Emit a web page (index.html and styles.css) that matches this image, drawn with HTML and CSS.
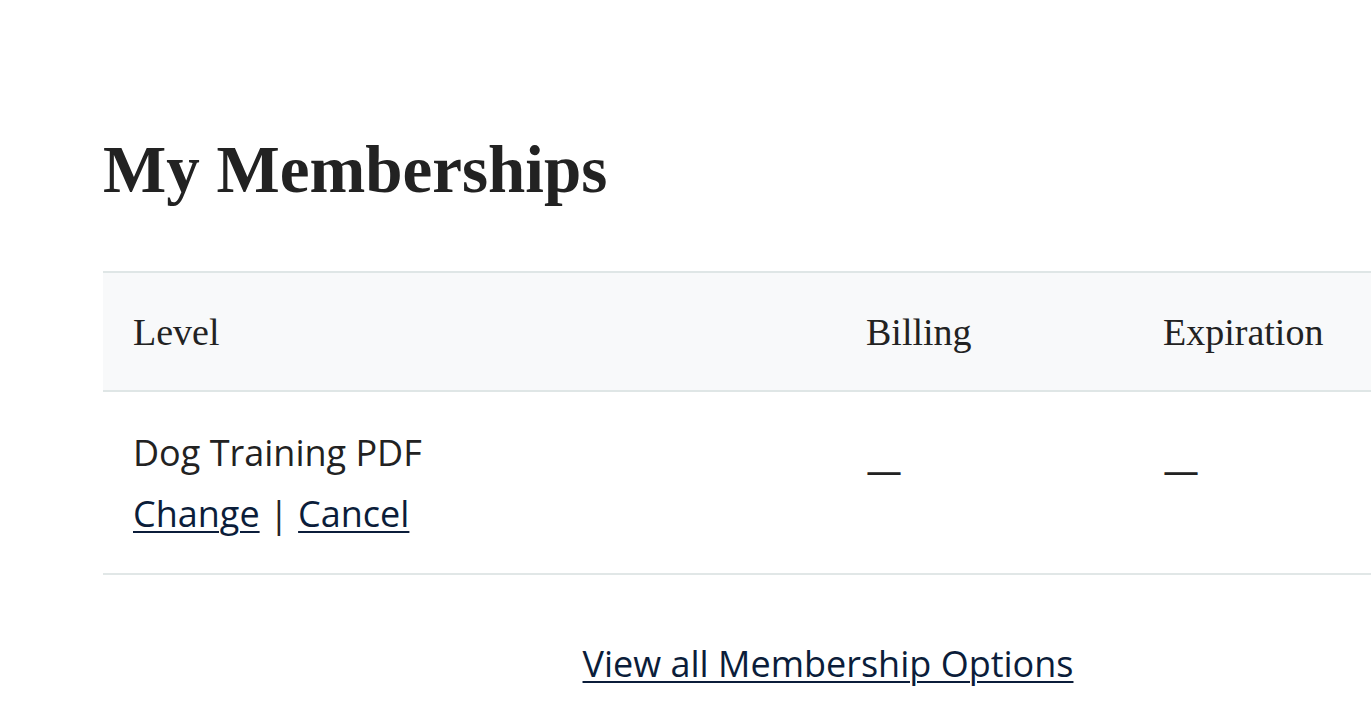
FILE: index.html
```html
<!DOCTYPE html>
<html lang="en">
<head>
<meta charset="utf-8">
<title>My Memberships</title>
<link rel="stylesheet" href="styles.css">
</head>
<body>
<main class="wrap">
  <h1 class="title">My Memberships</h1>
  <table class="members">
    <colgroup>
      <col class="c-level">
      <col class="c-billing">
      <col class="c-exp">
    </colgroup>
    <thead>
      <tr>
        <th>Level</th>
        <th>Billing</th>
        <th>Expiration</th>
      </tr>
    </thead>
    <tbody>
      <tr>
        <td>
          <div class="level-name">Dog Training PDF</div>
          <div class="actions"><a href="#">Change</a> | <a href="#">Cancel</a></div>
        </td>
        <td class="dash">—</td>
        <td class="dash">—</td>
      </tr>
    </tbody>
  </table>
  <p class="all"><a href="#">View all Membership Options</a></p>
</main>
</body>
</html>
```
FILE: styles.css
```css
html, body {
  margin: 0;
  padding: 0;
  background: #ffffff;
  overflow: hidden;
}
body {
  font-family: "Open Sans", "Liberation Sans", sans-serif;
  color: #222222;
}
.wrap {
  padding: 0 0 0 103px;
}
.title {
  font-family: "Liberation Serif", "Times New Roman", serif;
  font-weight: 700;
  font-size: 67px;
  line-height: 1;
  margin: 0;
  padding: 136px 0 0 0;
  height: 135px;
  color: #222222;
}
.members {
  width: 100%;
  border-collapse: collapse;
  table-layout: fixed;
}
.c-level { width: 733px; }
.c-billing { width: 297px; }
.members th {
  font-family: "Liberation Serif", "Times New Roman", serif;
  font-weight: 400;
  font-size: 38px;
  text-align: left;
  background: #f8f9fa;
  height: 117px;
  padding: 0 0 0 30px;
  border-top: 2px solid #dfe6e6;
  border-bottom: 2px solid #dfe6e6;
  vertical-align: middle;
  white-space: nowrap;
}
.members td {
  font-size: 36px;
  line-height: 61px;
  padding: 30px 0 29px 30px;
  border-bottom: 2px solid #e1e7e7;
  vertical-align: middle;
  text-align: left;
}
.members td.dash { padding-bottom: 54px; }
.members a, .all a {
  color: #0b1d3a;
  text-decoration: underline;
  text-decoration-thickness: 2px;
  text-underline-offset: 4px;
}
.all {
  text-align: center;
  font-size: 36px;
  margin: 0;
  padding: 64px 0 0 182px;
}
```
